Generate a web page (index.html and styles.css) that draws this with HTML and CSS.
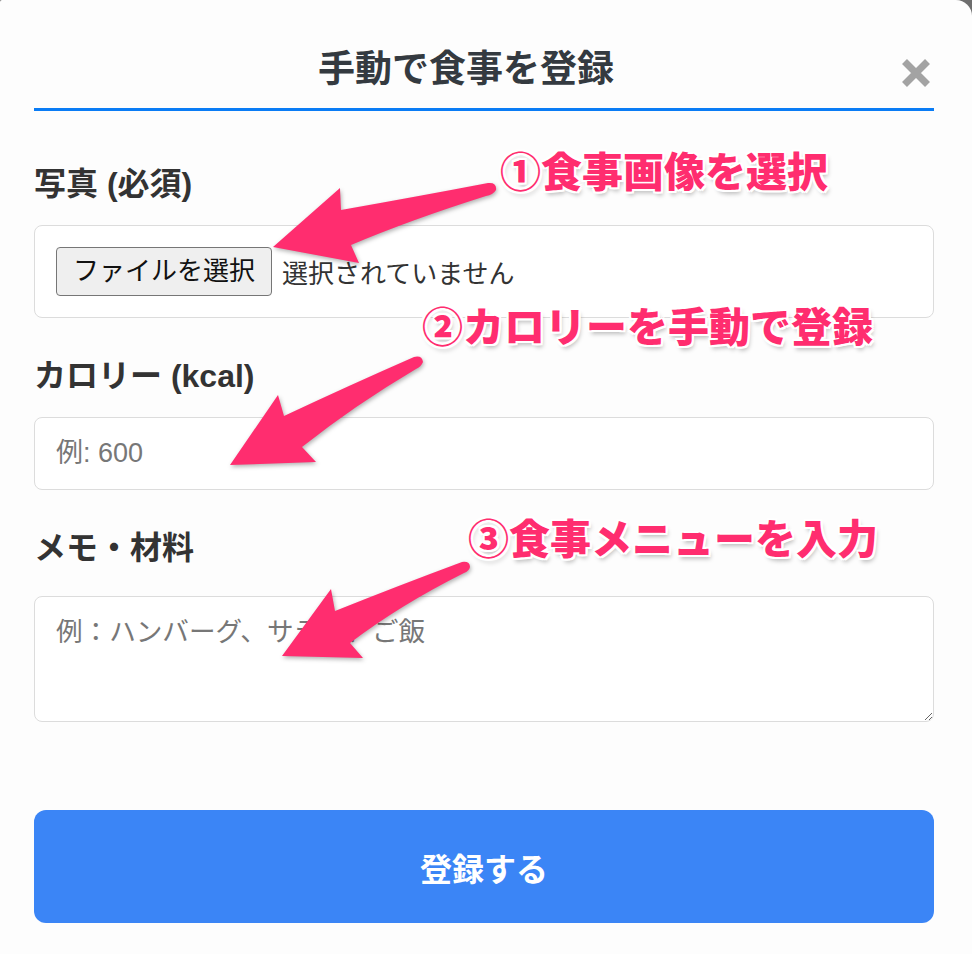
FILE: index.html
```html
<!DOCTYPE html>
<html lang="ja">
<head>
    <meta charset="UTF-8">
    <meta name="viewport" content="width=device-width, initial-scale=1.0">
    <title>手動で食事を登録</title>
    <link rel="stylesheet" href="styles.css">
</head>
<body>
    <div class="modal">
        <div class="modal-header">
            <h2 class="modal-title">手動で食事を登録</h2>
            <button class="close" type="button" aria-label="閉じる">
                <svg width="30" height="30" viewBox="0 0 30 30">
                    <path d="M3.5 3.5 L26.5 26.5 M26.5 3.5 L3.5 26.5" stroke="#a3a3a3" stroke-width="7" fill="none"/>
                </svg>
            </button>
        </div>

        <form class="meal-form">
            <div class="field">
                <label class="field-label">写真 (必須)</label>
                <div class="file-box">
                    <label class="file-btn">ファイルを選択<input type="file" hidden></label>
                    <span class="file-name">選択されていません</span>
                </div>
            </div>
            <div class="field">
                <label class="field-label">カロリー (kcal)</label>
                <input class="text-input" type="number" placeholder="例: 600">
            </div>
            <div class="field">
                <label class="field-label">メモ・材料</label>
                <textarea class="memo" placeholder="例：ハンバーグ、サラダ、ご飯"></textarea>
            </div>
            <button class="submit" type="submit">登録する</button>
        </form>

        <!-- 説明用の矢印と注釈 -->
        <svg class="arrows" width="972" height="954" viewBox="0 0 972 954">
            <path d="M273,247 L340,188 L341,210 Q420,196 488,183 Q497,182 496,190 Q493,195 486,196 Q410,220 351,245 L359,263 Z"/>
            <path d="M230,465 L278,395 L284,416 Q350,385 414,357 Q422,355 423,362 Q421,367 416,369 Q355,405 302,447 L316,462 Z"/>
            <path d="M282,656 L331,589 L335,611 Q400,585 462,562 Q470,561 470,567 Q469,571 464,573 Q400,605 350,643 L363,658 Z"/>
        </svg>
        <div class="note note1">①食事画像を選択</div>
        <div class="note note2">②カロリーを手動で登録</div>
        <div class="note note3">③食事メニューを入力</div>
    </div>
</body>
</html>
```

FILE: styles.css
```css
* {
    box-sizing: border-box;
    margin: 0;
    padding: 0;
}
body {
    background-color: #6e6e6e;
    font-family: "Liberation Sans", "Noto Sans CJK JP", sans-serif;
    color: #333;
}
.modal {
    position: relative;
    width: 972px;
    min-height: 954px;
    padding: 0 38px 0 34px;
    background-color: #fdfdfd;
    border-top-right-radius: 16px;
    border-top-left-radius: 2px;
}
.modal-header {
    display: flex;
    align-items: flex-start;
    padding-top: 41px;
    height: 111px;
    border-bottom: 3px solid #0a7cf5;
}
.modal-title {
    flex: 1;
    text-align: center;
    font-family: "Noto Sans CJK JP", sans-serif;
    font-size: 37px;
    line-height: 50px;
    font-weight: 700;
    color: #343a40;
}
.close {
    width: 36px;
    margin-top: 17px;
    border: none;
    background: none;
    cursor: pointer;
}
.close svg {
    display: block;
    margin-left: auto;
    margin-right: 3px;
}
.meal-form {
    padding-top: 52px;
}
.field {
    margin-bottom: 37px;
}
.field-label {
    display: block;
    margin-bottom: 20px;
    font-size: 32px;
    line-height: 42px;
    font-weight: 700;
    color: #333;
}
.file-box {
    display: flex;
    align-items: center;
    height: 93px;
    padding: 0 21px;
    background-color: #fff;
    border: 1px solid #dcdcdc;
    border-radius: 8px;
}
.file-btn {
    display: inline-block;
    height: 49px;
    padding: 0 16px;
    font-size: 26px;
    line-height: 47px;
    color: #111;
    background-color: #efefef;
    border: 1px solid #767676;
    border-radius: 4px;
}
.file-name {
    margin-left: 10px;
    font-size: 26px;
    color: #333;
}
.text-input {
    display: block;
    width: 100%;
    height: 73px;
    padding: 0 21px;
    font-family: inherit;
    font-size: 27px;
    background-color: #fff;
    border: 1px solid #dcdcdc;
    border-radius: 8px;
    outline: none;
}
.memo {
    display: block;
    width: 100%;
    height: 126px;
    margin-top: 27px;
    padding: 18px 21px;
    font-family: inherit;
    font-size: 26.6px;
    line-height: 34px;
    background-color: #fff;
    border: 1px solid #dcdcdc;
    border-radius: 8px;
    resize: vertical;
    outline: none;
}
.text-input::placeholder,
.memo::placeholder {
    color: #777;
}
.submit {
    display: block;
    width: 100%;
    height: 113px;
    margin-top: 88px;
    font-family: "Noto Sans CJK JP", sans-serif;
    font-size: 32px;
    font-weight: 700;
    color: #fff;
    background-color: #3b85f6;
    border: none;
    border-radius: 12px;
}
.arrows {
    position: absolute;
    top: 0;
    left: 0;
    fill: #ff2d6f;
    filter: drop-shadow(1px 2px 2px rgba(0, 0, 0, .3));
    pointer-events: none;
}
.note {
    position: absolute;
    font-family: "Noto Sans CJK JP", sans-serif;
    font-size: 41px;
    line-height: 1;
    font-weight: 900;
    color: #ff2d6f;
    white-space: nowrap;
    text-shadow:
        2px 0 0 #fff, -2px 0 0 #fff, 0 2px 0 #fff, 0 -2px 0 #fff,
        2px 2px 0 #fff, -2px -2px 0 #fff, 2px -2px 0 #fff, -2px 2px 0 #fff,
        2px 4px 4px rgba(0, 0, 0, .25);
}
.note1 {
    top: 149px;
    left: 500px;
}
.note2 {
    top: 304px;
    left: 422px;
}
.note3 {
    top: 516px;
    left: 468px;
}
```
